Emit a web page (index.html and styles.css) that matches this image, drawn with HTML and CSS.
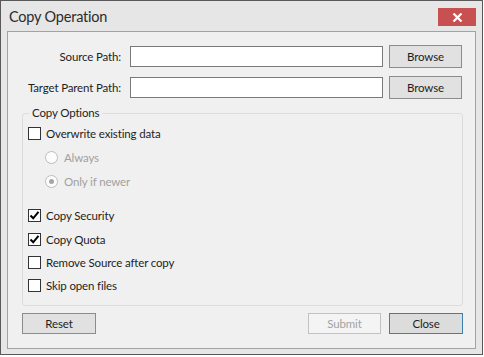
FILE: index.html
```html
<!DOCTYPE html>
<html lang="en">
<head>
    <meta charset="UTF-8">
    <title>Copy Operation</title>
    <link rel="stylesheet" href="styles.css">
</head>
<body>
    <div class="window">
        <div class="titlebar">
            <span class="title">Copy Operation</span>
            <button class="close-x" aria-label="Close">
                <svg width="11" height="9" viewBox="0 0 11 9"><path d="M1.5 0.5 L9.5 8.5 M9.5 0.5 L1.5 8.5" stroke="#fff" stroke-width="2.2"/></svg>
            </button>
        </div>

        <div class="panel">
            <!-- Paths -->
            <div class="path-row">
                <label class="path-label" for="source">Source Path:</label>
                <input class="path-input" type="text" id="source">
                <button class="btn">Browse</button>
            </div>
            <div class="path-row">
                <label class="path-label" for="target">Target Parent Path:</label>
                <input class="path-input" type="text" id="target">
                <button class="btn">Browse</button>
            </div>

            <!-- Options -->
            <fieldset class="group">
                <legend>Copy Options</legend>
                <div class="opt">
                    <span class="check"></span>
                    <span>Overwrite existing data</span>
                </div>
                <div class="opt sub disabled">
                    <span class="radio"></span>
                    <span>Always</span>
                </div>
                <div class="opt sub disabled">
                    <span class="radio on"></span>
                    <span>Only if newer</span>
                </div>
                <div class="opt spaced">
                    <span class="check">
                        <svg width="11" height="11" viewBox="0 0 11 11"><path d="M1.5 5.5 L4.2 8.3 L9.5 1.8" fill="none" stroke="#000" stroke-width="2"/></svg>
                    </span>
                    <span>Copy Security</span>
                </div>
                <div class="opt">
                    <span class="check">
                        <svg width="11" height="11" viewBox="0 0 11 11"><path d="M1.5 5.5 L4.2 8.3 L9.5 1.8" fill="none" stroke="#000" stroke-width="2"/></svg>
                    </span>
                    <span>Copy Quota</span>
                </div>
                <div class="opt tight">
                    <span class="check"></span>
                    <span>Remove Source after copy</span>
                </div>
                <div class="opt tight">
                    <span class="check"></span>
                    <span>Skip open files</span>
                </div>
            </fieldset>

            <!-- Actions -->
            <div class="actions">
                <button class="btn wide">Reset</button>
                <div class="actions-right">
                    <button class="btn" disabled>Submit</button>
                    <button class="btn wide default">Close</button>
                </div>
            </div>
        </div>
    </div>
</body>
</html>
```

FILE: styles.css
```css
* {
    margin: 0;
    padding: 0;
    box-sizing: border-box;
    font-family: Lato, 'Liberation Sans', sans-serif;
}

body {
    background: #fff;
    color: #1e1e1e;
    font-size: 11.5px;
    letter-spacing: -0.15px;
}

.window {
    width: 483px;
    height: 355px;
    border: 1px solid #595959;
    background: #e6e6e6;
}

.titlebar {
    display: flex;
    justify-content: space-between;
    align-items: flex-start;
    height: 30px;
    padding: 7px 6px 0 8px;
}

.title {
    font-size: 14.5px;
    line-height: 18px;
    letter-spacing: -0.2px;
    color: #2b2b2b;
}

.close-x {
    display: flex;
    align-items: center;
    justify-content: center;
    width: 38px;
    height: 18px;
    border: none;
    background: #c75050;
}

.panel {
    height: 318px;
    margin: 0 6px;
    padding-top: 13px;
    border: 1px solid #a3a3a3;
    background: #f0f0f0;
}

.path-row {
    display: flex;
    align-items: center;
    height: 23px;
    margin-bottom: 8px;
}

.path-label {
    width: 113px;
    text-align: right;
    margin-right: 9px;
}

.path-input {
    width: 253px;
    height: 21px;
    margin-right: 6px;
    border: 1px solid #7a7a7a;
    background: #fff;
}

.btn {
    width: 73px;
    height: 23px;
    border: 1px solid #8c8c8c;
    background: #e1e1e1;
    color: #1e1e1e;
    font-size: 11.5px;
    letter-spacing: -0.15px;
}

.btn.wide {
    width: 74px;
}

.btn:disabled {
    border-color: #c2c2c2;
    background: #f4f4f4;
    color: #a3a3a3;
}

.btn.default {
    border-color: #3c7fb1;
    background: #dcdcdc;
}

.group {
    margin: -2px 12px 0 14px;
    height: 201px;
    padding: 0 0 0 5px;
    border: 1px solid #dcdcdc;
    border-radius: 3px;
}

.group legend {
    margin-left: 1px;
    padding: 0 3px;
    line-height: 16px;
}

.opt {
    display: flex;
    align-items: center;
    height: 23px;
    margin-top: 1px;
}

.opt.tight {
    margin-top: 0;
}

.opt.sub {
    padding-left: 17px;
}

.opt.spaced {
    margin-top: 11px;
}

.opt.disabled {
    color: #a0a0a0;
}

.check {
    display: flex;
    align-items: center;
    justify-content: center;
    width: 13px;
    height: 13px;
    margin-right: 5px;
    border: 1px solid #333;
    background: #fff;
}

.radio {
    display: flex;
    align-items: center;
    justify-content: center;
    width: 13px;
    height: 13px;
    margin-right: 6px;
    border: 1px solid #bcbcbc;
    border-radius: 50%;
    background: #fcfcfc;
}

.radio.on::after {
    content: '';
    width: 5px;
    height: 5px;
    border-radius: 50%;
    background: #a6a6a6;
}

.actions {
    display: flex;
    justify-content: space-between;
    margin: 7px 12px 0 14px;
}

.actions .btn {
    height: 21px;
}

.actions-right {
    display: flex;
    gap: 8px;
}
```
